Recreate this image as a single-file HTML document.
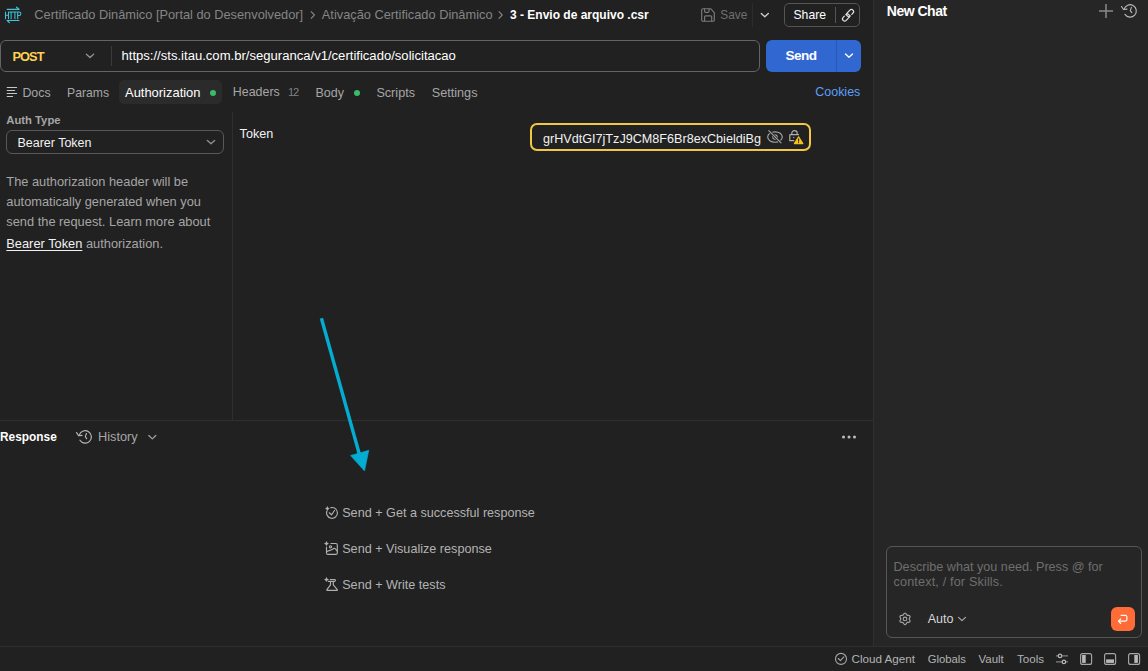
<!DOCTYPE html>
<html><head><meta charset="utf-8"><title>Postman</title>
<style>
html,body{margin:0;padding:0;}
body{width:1148px;height:671px;overflow:hidden;position:relative;background:#212121;font-family:"Liberation Sans",sans-serif;}
.t{position:absolute;white-space:nowrap;}
svg{overflow:visible;}
</style></head><body>
<div style="position:absolute;left:874px;top:0px;width:274px;height:646px;background:#262626;"></div>
<div style="position:absolute;left:873px;top:0px;width:1px;height:646px;background:#2f2f2f;"></div>
<div style="position:absolute;left:0px;top:420px;width:873px;height:1px;background:#2f2f2f;"></div>
<div style="position:absolute;left:232px;top:112px;width:1px;height:308px;background:#2f2f2f;"></div>
<div style="position:absolute;left:0px;top:646px;width:1148px;height:1px;background:#2f2f2f;"></div>
<svg style="position:absolute;left:0px;top:0px" width="26" height="28" viewBox="0 0 26 28" fill="none"><g stroke="#3fc6dc" stroke-width="1.2" stroke-linecap="round" fill="none">
<path d="M7.2 9.3H19M16.6 7.2L19 9.3"/><path d="M7.2 20.5H19M7.2 20.5L9.4 22.6"/>
<g stroke-width="1.05"><path d="M5.5 11.9V18.7M8.5 11.9V18.7M5.5 15.2H8.5"/><path d="M9.5 11.9H12.7M11.1 11.9V18.7"/><path d="M13.3 11.9H16.5M14.9 11.9V18.7"/><path d="M17.7 18.7V11.9H19.1A1.7 1.7 0 0 1 19.1 15.4H17.7"/></g></g></svg>
<div class="t" style="left:34.3px;top:7px;font-size:12.8px;line-height:16px;color:#858585;font-weight:400;">Certificado Dinâmico [Portal do Desenvolvedor]</div>
<svg style="position:absolute;left:306px;top:8px" width="12" height="14" viewBox="306 8 12 14" fill="none"><path d="M311.2 11.7L314.40000000000003 15L311.2 18.3" stroke="#858585" stroke-width="1.1" stroke-linecap="round" stroke-linejoin="round"/></svg>
<div class="t" style="left:321.8px;top:7px;font-size:12.8px;line-height:16px;color:#858585;font-weight:400;">Ativação Certificado Dinâmico</div>
<svg style="position:absolute;left:494px;top:8px" width="12" height="14" viewBox="494 8 12 14" fill="none"><path d="M499.0 11.7L502.20000000000005 15L499.0 18.3" stroke="#858585" stroke-width="1.1" stroke-linecap="round" stroke-linejoin="round"/></svg>
<div class="t" style="left:510px;top:8px;font-size:12.0px;line-height:15px;color:#ffffff;font-weight:700;">3 - Envio de arquivo .csr</div>
<svg style="position:absolute;left:698px;top:5px" width="20" height="20" viewBox="698 5 20 20" fill="none"><g stroke="#7a7a7a" stroke-width="1.15" fill="none" stroke-linejoin="round">
<path d="M703 8.7H710.6L714.3 12.6V19.9A1.3 1.3 0 0 1 713 21.2H703A1.3 1.3 0 0 1 701.7 19.9V10A1.3 1.3 0 0 1 703 8.7Z"/>
<path d="M704.6 8.7V11.2A1.1 1.1 0 0 0 705.7 12.3H707.9A1.1 1.1 0 0 0 709 11.2V8.7"/>
<path d="M704.6 21.2V16.9A1.1 1.1 0 0 1 705.7 15.8H710.6A1.1 1.1 0 0 1 711.7 16.9V21.2"/></g></svg>
<div class="t" style="left:720.3px;top:8px;font-size:11.85px;line-height:15px;color:#6f6f6f;font-weight:400;">Save</div>
<div style="position:absolute;left:752px;top:3px;width:1px;height:24px;background:#2c2c2c;"></div>
<svg style="position:absolute;left:758px;top:8px" width="14" height="14" viewBox="758 8 14 14" fill="none"><path d="M761.3 13.45L764.8 16.75L768.3 13.45" stroke="#d0d0d0" stroke-width="1.35" stroke-linecap="round" stroke-linejoin="round"/></svg>
<div style="position:absolute;left:784px;top:3px;width:76px;height:24px;box-sizing:border-box;border:1px solid #555;border-radius:5px;"></div>
<div class="t" style="left:793.5px;top:8px;font-size:12.18px;line-height:15px;color:#ffffff;font-weight:400;">Share</div>
<div style="position:absolute;left:835px;top:7px;width:1px;height:16px;background:#555;"></div>
<svg style="position:absolute;left:838px;top:4px" width="20" height="22" viewBox="838 4 20 22" fill="none"><g stroke="#e0e0e0" stroke-width="1.25" fill="none" stroke-linecap="round"><path d="M851.76 14.38L852.96 13.18A2.15 2.15 0 0 0 849.92 10.14L847.24 12.82A2.15 2.15 0 0 0 850.28 15.86"/><path d="M844.34 16.12L843.14 17.32A2.15 2.15 0 0 0 846.18 20.36L848.86 17.68A2.15 2.15 0 0 0 845.82 14.64"/></g></svg>
<div style="position:absolute;left:0px;top:40px;width:760px;height:32px;box-sizing:border-box;border:1px solid #646464;border-radius:6px;"></div>
<div class="t" style="left:12.5px;top:49px;font-size:12.8px;line-height:16px;color:#ffd150;font-weight:700;letter-spacing:-0.95px;">POST</div>
<svg style="position:absolute;left:84px;top:50px" width="14" height="12" viewBox="84 50 14 12" fill="none"><path d="M86.4 54.199999999999996L90 57.4L93.6 54.199999999999996" stroke="#909090" stroke-width="1.4" stroke-linecap="round" stroke-linejoin="round"/></svg>
<div style="position:absolute;left:111px;top:46px;width:1px;height:20px;background:#3a3a3a;"></div>
<div class="t" style="left:121.5px;top:48px;font-size:13.08px;line-height:16px;color:#ffffff;font-weight:400;">https://sts.itau.com.br/seguranca/v1/certificado/solicitacao</div>
<div style="position:absolute;left:766px;top:40px;width:95px;height:32px;background:#3167d1;border-radius:6px;"></div>
<div style="position:absolute;left:836px;top:40px;width:1px;height:32px;background:#2a57b0;"></div>
<div class="t" style="left:785.6px;top:47px;font-size:13.6px;line-height:17px;color:#ffffff;font-weight:700;letter-spacing:-0.6px;">Send</div>
<svg style="position:absolute;left:842px;top:50px" width="14" height="12" viewBox="842 50 14 12" fill="none"><path d="M845.5 54.050000000000004L849 57.35L852.5 54.050000000000004" stroke="#ffffff" stroke-width="1.35" stroke-linecap="round" stroke-linejoin="round"/></svg>
<svg style="position:absolute;left:4px;top:84px" width="16" height="16" viewBox="4 84 16 16" fill="none"><g stroke="#c8c8c8" stroke-width="1.15" stroke-linecap="round"><path d="M7.2 87.5H16.6M7.2 90.5H14.6M7.2 93.5H16.6M7.2 96.5H12.6"/></g></svg>
<div class="t" style="left:22.4px;top:86px;font-size:12.38px;line-height:15px;color:#a6a6a6;font-weight:400;">Docs</div>
<div class="t" style="left:67px;top:86px;font-size:12.19px;line-height:15px;color:#a6a6a6;font-weight:400;">Params</div>
<div style="position:absolute;left:119px;top:80px;width:103px;height:24px;background:#2b2b2b;border-radius:5px;"></div>
<div class="t" style="left:125px;top:85px;font-size:12.95px;line-height:16px;color:#ffffff;font-weight:400;">Authorization</div>
<div style="position:absolute;left:210px;top:90px;width:6px;height:6px;background:#3cb96b;border-radius:50%;"></div>
<div class="t" style="left:232.8px;top:84px;font-size:12.43px;line-height:16px;color:#a6a6a6;font-weight:400;">Headers</div>
<div class="t" style="left:288px;top:85px;font-size:11.2px;line-height:14px;color:#808080;font-weight:400;letter-spacing:-1.3px;">12</div>
<div class="t" style="left:315.4px;top:85px;font-size:12.5px;line-height:16px;color:#a6a6a6;font-weight:400;">Body</div>
<div style="position:absolute;left:354px;top:90px;width:6px;height:6px;background:#3cb96b;border-radius:50%;"></div>
<div class="t" style="left:376.4px;top:85px;font-size:12.63px;line-height:16px;color:#a6a6a6;font-weight:400;">Scripts</div>
<div class="t" style="left:431.7px;top:85px;font-size:12.68px;line-height:16px;color:#a6a6a6;font-weight:400;">Settings</div>
<div class="t" style="left:815.3px;top:84px;font-size:12.46px;line-height:16px;color:#5e9ef7;font-weight:400;">Cookies</div>
<div class="t" style="left:6.3px;top:113px;font-size:11.28px;line-height:14px;color:#a6a6a6;font-weight:700;">Auth Type</div>
<div style="position:absolute;left:6px;top:130px;width:218px;height:24px;box-sizing:border-box;border:1px solid #585858;border-radius:6px;"></div>
<div class="t" style="left:17.4px;top:135px;font-size:12.51px;line-height:16px;color:#f2f2f2;font-weight:400;">Bearer Token</div>
<svg style="position:absolute;left:204px;top:136px" width="14" height="12" viewBox="204 136 14 12" fill="none"><path d="M207.4 140.5L211 143.7L214.6 140.5" stroke="#909090" stroke-width="1.4" stroke-linecap="round" stroke-linejoin="round"/></svg>
<div class="t" style="left:6.3px;top:174px;font-size:12.84px;line-height:16px;color:#a6a6a6;font-weight:400;">The authorization header will be</div>
<div class="t" style="left:6.3px;top:194px;font-size:12.84px;line-height:16px;color:#a6a6a6;font-weight:400;">automatically generated when you</div>
<div class="t" style="left:6.3px;top:214px;font-size:12.84px;line-height:16px;color:#a6a6a6;font-weight:400;">send the request. Learn more about</div>
<div class="t" style="left:6.3px;top:236px;font-size:12.84px;line-height:16px;color:#a6a6a6;font-weight:400;"><span style="color:#f2f2f2;text-decoration:underline;text-underline-offset:2px">Bearer Token</span> authorization.</div>
<div class="t" style="left:239.6px;top:126px;font-size:12.59px;line-height:16px;color:#f2f2f2;font-weight:400;">Token</div>
<div style="position:absolute;left:530px;top:123px;width:281px;height:28px;box-sizing:border-box;border:2px solid #f2c744;border-radius:7px;"></div>
<div class="t" style="left:543px;top:131px;font-size:12.61px;line-height:16px;color:#f2f2f2;font-weight:400;">grHVdtGI7jTzJ9CM8F6Br8exCbieldiBg</div>
<svg style="position:absolute;left:764px;top:126px" width="22" height="20" viewBox="764 126 22 20" fill="none"><g stroke="#a6a6a6" stroke-width="1.15" fill="none" stroke-linecap="round">
<ellipse cx="775" cy="137" rx="7.3" ry="5.2"/><circle cx="775" cy="137" r="2.2"/><path d="M768.8 130.6L781 142.8" stroke="#212121" stroke-width="2.6"/><path d="M768.8 130.6L781 142.8"/></g></svg>
<svg style="position:absolute;left:786px;top:126px" width="20" height="20" viewBox="786 126 20 20" fill="none"><g stroke="#b0b0b0" stroke-width="1.15" fill="none"><path d="M791.8 134.6V133.3A2.7 2.7 0 0 1 797.2 133.3V134.6"/><path d="M789.8 134.6H799M789.8 134.6V140.6H794.2"/></g>
<path d="M798.6 136.8L802.8 143.6H794.4Z" fill="#f5c21b" stroke="#f5c21b" stroke-width="1.2" stroke-linejoin="round"/>
<path d="M798.6 138.8V141.1M798.6 142.5V142.6" stroke="#212121" stroke-width="1.1" stroke-linecap="round"/><circle cx="793.7" cy="137.5" r="0.8" fill="#8a8a8a"/></svg>
<div class="t" style="left:0px;top:430px;font-size:11.88px;line-height:15px;color:#ffffff;font-weight:700;">Response</div>
<svg style="position:absolute;left:72px;top:426px" width="24" height="22" viewBox="72 426 24 22" fill="none"><g stroke="#b8b8b8" stroke-width="1.15" fill="none" stroke-linecap="round" stroke-linejoin="round"><path d="M79.37 434.78A6.2 6.2 0 1 1 79.94 440.19"/><path d="M76.6 432.6L78.6 435.8L82 435.4"/><path d="M86.5 433.5L85.3 436.4L86.7 438.7"/></g></svg>
<div class="t" style="left:98px;top:429px;font-size:12.76px;line-height:16px;color:#a6a6a6;font-weight:400;">History</div>
<svg style="position:absolute;left:144px;top:430px" width="16" height="14" viewBox="144 430 16 14" fill="none"><path d="M148.8 435.55L152.3 438.84999999999997L155.8 435.55" stroke="#a0a0a0" stroke-width="1.3" stroke-linecap="round" stroke-linejoin="round"/></svg>
<svg style="position:absolute;left:838px;top:431px" width="22" height="12" viewBox="838 431 22 12" fill="none"><g fill="#bdbdbd"><circle cx="843.5" cy="437" r="1.5"/><circle cx="849" cy="437" r="1.5"/><circle cx="854.5" cy="437" r="1.5"/></g></svg>
<svg style="position:absolute;left:320px;top:500px" width="22" height="22" viewBox="320 500 22 22" fill="none"><g stroke="#b0b0b0" stroke-width="1.15" fill="none" stroke-linecap="round" stroke-linejoin="round"><path d="M330.88 507.62A5.4 5.4 0 1 1 326.93 511.05"/><path d="M329.3 512.8L331.5 514.8L334.5 510.5"/></g><path d="M327.4 505.9Q327.9 507.9 329.9 508.4Q327.9 508.9 327.4 510.9Q326.9 508.9 324.9 508.4Q326.9 507.9 327.4 505.9Z" fill="#b0b0b0"/></svg>
<div class="t" style="left:342.2px;top:505px;font-size:12.64px;line-height:16px;color:#b3b3b3;font-weight:400;">Send + Get a successful response</div>
<svg style="position:absolute;left:320px;top:536px" width="22" height="22" viewBox="320 536 22 22" fill="none"><g stroke="#b0b0b0" stroke-width="1.15" fill="none" stroke-linecap="round" stroke-linejoin="round"><path d="M330.9 543.5H335.8A1.5 1.5 0 0 1 337.3 545V552.9A1.5 1.5 0 0 1 335.8 554.4H328A1.5 1.5 0 0 1 326.5 552.9V547.1"/><circle cx="330.5" cy="546.8" r="1.1"/><path d="M326.6 551.8L329.2 550.6Q331.4 550.4 332.6 549.2L334 548.3Q334.8 548 335.6 549.1L337.2 551"/></g><path d="M326.5 540.9Q327.0 542.9 329.0 543.4Q327.0 543.9 326.5 545.9Q326.0 543.9 324.0 543.4Q326.0 542.9 326.5 540.9Z" fill="#b0b0b0"/></svg>
<div class="t" style="left:342.2px;top:541px;font-size:12.64px;line-height:16px;color:#b3b3b3;font-weight:400;">Send + Visualize response</div>
<svg style="position:absolute;left:320px;top:572px" width="22" height="22" viewBox="320 572 22 22" fill="none"><g stroke="#b0b0b0" stroke-width="1.15" fill="none" stroke-linecap="round" stroke-linejoin="round"><path d="M330.3 579.5H334.8A1 1 0 0 1 334.8 581.3H328.4"/><path d="M330.5 581.3V584.9L326.9 589.6Q326.4 590.4 327.4 590.4H336.8Q337.8 590.4 337.3 589.6L333.3 584.9V581.3"/></g><path d="M326.5 576.9Q327.0 578.9 329.0 579.4Q327.0 579.9 326.5 581.9Q326.0 579.9 324.0 579.4Q326.0 578.9 326.5 576.9Z" fill="#b0b0b0"/></svg>
<div class="t" style="left:342.2px;top:577px;font-size:12.64px;line-height:16px;color:#b3b3b3;font-weight:400;">Send + Write tests</div>
<svg style="position:absolute;left:300px;top:300px" width="90" height="190" viewBox="300 300 90 190" fill="none"><path d="M321.4 318.3L359.6 455" stroke="#04acd1" stroke-width="3.4" stroke-linecap="butt"/>
<path d="M350.6 455.6L368.8 450.3L364.5 471Z" fill="#04acd1" stroke="#04acd1" stroke-width="0.6" stroke-linejoin="round"/></svg>
<div class="t" style="left:886.8px;top:2px;font-size:14px;line-height:18px;color:#ffffff;font-weight:700;letter-spacing:-0.5px;">New Chat</div>
<svg style="position:absolute;left:1096px;top:2px" width="20" height="18" viewBox="1096 2 20 18" fill="none"><path d="M1106 4V17.9M1099 11H1113" stroke="#8a8a8a" stroke-width="1.5"/></svg>
<svg style="position:absolute;left:1118px;top:0px" width="24" height="22" viewBox="1118 0 24 22" fill="none"><g stroke="#b8b8b8" stroke-width="1.15" fill="none" stroke-linecap="round" stroke-linejoin="round"><path d="M1124.14 9.19A6.2 6.2 0 1 1 1124.96 14.37"/><path d="M1121.5 6.5L1123.5 9.5L1127 9.1"/><path d="M1131.4 7.4L1130.3 10.6L1131.8 12.6"/></g></svg>
<div style="position:absolute;left:886px;top:546px;width:256px;height:92px;box-sizing:border-box;border:1px solid #565656;border-radius:6px;"></div>
<div class="t" style="left:893.5px;top:559px;font-size:12.63px;line-height:16px;color:#6e6e6e;font-weight:400;">Describe what you need. Press @ for</div>
<div class="t" style="left:893.5px;top:574px;font-size:12.63px;line-height:16px;color:#6e6e6e;font-weight:400;letter-spacing:0.16px;">context, / for Skills.</div>
<svg style="position:absolute;left:896px;top:610px" width="18" height="18" viewBox="896 610 18 18" fill="none"><g stroke="#a6a6a6" stroke-width="1.1" fill="none"><path d="M909.20 618.90L909.28 619.27L909.51 619.69L909.78 620.18L910.00 620.72L910.07 621.27L909.94 621.75L909.59 622.11L909.08 622.32L908.50 622.40L907.94 622.40L907.47 622.42L907.10 622.54L906.82 622.80L906.56 623.20L906.28 623.68L905.92 624.14L905.49 624.48L905.00 624.60L904.51 624.48L904.08 624.14L903.72 623.68L903.44 623.20L903.18 622.80L902.90 622.54L902.53 622.42L902.06 622.40L901.50 622.40L900.92 622.32L900.41 622.11L900.06 621.75L899.93 621.27L900.00 620.72L900.22 620.18L900.49 619.69L900.72 619.27L900.80 618.90L900.72 618.53L900.49 618.11L900.22 617.62L900.00 617.08L899.93 616.53L900.06 616.05L900.41 615.69L900.92 615.48L901.50 615.40L902.06 615.40L902.53 615.38L902.90 615.26L903.18 615.00L903.44 614.60L903.72 614.12L904.08 613.66L904.51 613.32L905.00 613.20L905.49 613.32L905.92 613.66L906.28 614.12L906.56 614.60L906.82 615.00L907.10 615.26L907.47 615.38L907.94 615.40L908.50 615.40L909.08 615.48L909.59 615.69L909.94 616.05L910.07 616.53L910.00 617.08L909.78 617.62L909.51 618.11L909.28 618.53L909.20 618.90Z"/><circle cx="905" cy="618.9" r="1.8"/></g></svg>
<div class="t" style="left:927.8px;top:611px;font-size:12.49px;line-height:16px;color:#d6d6d6;font-weight:400;">Auto</div>
<svg style="position:absolute;left:955px;top:613px" width="14" height="10" viewBox="955 613 14 10" fill="none"><path d="M958.5 617.35L962 620.65L965.5 617.35" stroke="#a6a6a6" stroke-width="1.3" stroke-linecap="round" stroke-linejoin="round"/></svg>
<div style="position:absolute;left:1111px;top:607px;width:24px;height:24px;background:#ff6c37;border-radius:6px;"></div>
<svg style="position:absolute;left:1111px;top:607px" width="24" height="24" viewBox="1111 607 24 24" fill="none"><g stroke="#ffffff" stroke-width="1.15" fill="none" stroke-linecap="round" stroke-linejoin="round">
<path d="M1121.2 615.4H1125.4A1.5 1.5 0 0 1 1126.9 616.9V619.6A1.5 1.5 0 0 1 1125.4 621.1H1118.5"/><path d="M1120.7 618.9L1118.5 621.1L1120.7 623.5"/></g></svg>
<svg style="position:absolute;left:832px;top:650px" width="18" height="18" viewBox="832 650 18 18" fill="none"><g stroke="#a6a6a6" stroke-width="1.1" fill="none" stroke-linecap="round" stroke-linejoin="round"><circle cx="841" cy="658.9" r="5.5"/><path d="M838.3 658.5L840.4 660.7L843.8 656.9"/></g></svg>
<div class="t" style="left:851.5px;top:651px;font-size:11.67px;line-height:15px;color:#b3b3b3;font-weight:400;">Cloud Agent</div>
<div class="t" style="left:927.7px;top:652px;font-size:11.27px;line-height:14px;color:#b3b3b3;font-weight:400;">Globals</div>
<div class="t" style="left:978.5px;top:652px;font-size:11.47px;line-height:14px;color:#b3b3b3;font-weight:400;">Vault</div>
<div class="t" style="left:1017px;top:652px;font-size:11.57px;line-height:14px;color:#b3b3b3;font-weight:400;">Tools</div>
<svg style="position:absolute;left:1054px;top:650px" width="16" height="16" viewBox="1054 650 16 16" fill="none"><g stroke="#808080" stroke-width="1.2"><path d="M1056 655.9H1068M1056 661.9H1068"/></g>
<g fill="#212121" stroke="#b8b8b8" stroke-width="1.2"><circle cx="1060" cy="655.9" r="1.7"/><circle cx="1063.9" cy="661.9" r="1.7"/></g></svg>
<svg style="position:absolute;left:1078px;top:650px" width="18" height="18" viewBox="1078 650 18 18" fill="none"><rect x="1080.6" y="653.6" width="11" height="10.8" rx="2" stroke="#a6a6a6" stroke-width="1.15" fill="none"/><rect x="1082.1" y="655" width="3.6" height="7.9" fill="#b8b8b8"/></svg>
<svg style="position:absolute;left:1102px;top:650px" width="18" height="18" viewBox="1102 650 18 18" fill="none"><rect x="1104.6" y="653.6" width="11" height="10.8" rx="2" stroke="#a6a6a6" stroke-width="1.15" fill="none"/><rect x="1106.1" y="659.4" width="7.9" height="3.5" fill="#b8b8b8"/></svg>
<svg style="position:absolute;left:1126px;top:650px" width="18" height="18" viewBox="1126 650 18 18" fill="none"><rect x="1128.6" y="653.6" width="11" height="10.8" rx="2" stroke="#a6a6a6" stroke-width="1.15" fill="none"/><rect x="1134.3" y="655" width="3.6" height="7.9" fill="#b8b8b8"/></svg>
</body></html>
